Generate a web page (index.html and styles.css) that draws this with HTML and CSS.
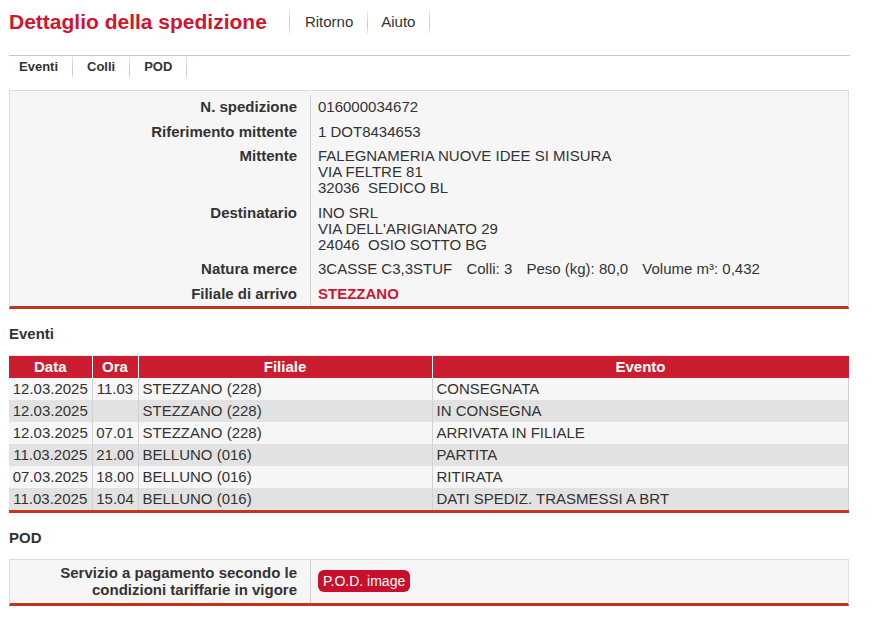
FILE: index.html
```html
<!DOCTYPE html>
<html lang="it">
<head>
<meta charset="utf-8">
<title>Dettaglio della spedizione</title>
<link rel="stylesheet" href="styles.css">
</head>
<body>
<div class="page">
  <header class="top">
    <h1 class="title">Dettaglio della spedizione</h1>
    <nav class="links">
      <a class="link" href="#">Ritorno</a>
      <a class="link last" href="#">Aiuto</a>
    </nav>
  </header>
  <nav class="tabs">
    <a class="tab first" href="#">Eventi</a>
    <a class="tab" href="#">Colli</a>
    <a class="tab" href="#">POD</a>
  </nav>

  <div class="box info">
    <table class="kv">
      <tr><th>N. spedizione</th><td>016000034672</td></tr>
      <tr><th>Riferimento mittente</th><td>1 DOT8434653</td></tr>
      <tr><th>Mittente</th><td>FALEGNAMERIA NUOVE IDEE SI MISURA<br>VIA FELTRE 81<br>32036&nbsp; SEDICO BL</td></tr>
      <tr><th>Destinatario</th><td>INO SRL<br>VIA DELL'ARIGIANATO 29<br>24046&nbsp; OSIO SOTTO BG</td></tr>
      <tr><th>Natura merce</th><td>3CASSE C3,3STUF <span class="gap">Colli: 3</span> <span class="gap">Peso (kg): 80,0</span> <span class="gap">Volume m³: 0,432</span></td></tr>
      <tr><th>Filiale di arrivo</th><td class="red">STEZZANO</td></tr>
    </table>
  </div>

  <h2 class="section">Eventi</h2>
  <table class="events">
    <colgroup><col class="c-data"><col class="c-ora"><col class="c-fil"><col></colgroup>
    <thead>
      <tr><th>Data</th><th>Ora</th><th>Filiale</th><th>Evento</th></tr>
    </thead>
    <tbody>
      <tr><td class="ctr">12.03.2025</td><td class="ctr">11.03</td><td>STEZZANO (228)</td><td>CONSEGNATA</td></tr>
      <tr><td class="ctr">12.03.2025</td><td class="ctr"></td><td>STEZZANO (228)</td><td>IN CONSEGNA</td></tr>
      <tr><td class="ctr">12.03.2025</td><td class="ctr">07.01</td><td>STEZZANO (228)</td><td>ARRIVATA IN FILIALE</td></tr>
      <tr><td class="ctr">11.03.2025</td><td class="ctr">21.00</td><td>BELLUNO (016)</td><td>PARTITA</td></tr>
      <tr><td class="ctr">07.03.2025</td><td class="ctr">18.00</td><td>BELLUNO (016)</td><td>RITIRATA</td></tr>
      <tr><td class="ctr">11.03.2025</td><td class="ctr">15.04</td><td>BELLUNO (016)</td><td>DATI SPEDIZ. TRASMESSI A BRT</td></tr>
    </tbody>
  </table>

  <h2 class="section">POD</h2>
  <div class="box pod">
    <table class="kv">
      <tr><th class="podlabel">Servizio a pagamento secondo le<br>condizioni tariffarie in vigore</th><td class="mid"><a class="btn" href="#">P.O.D. image</a></td></tr>
    </table>
  </div>
</div>
</body>
</html>
```

FILE: styles.css
```css
html, body {
  margin: 0;
  padding: 0;
  background: #fff;
}
body {
  font-family: "Liberation Sans", Arial, sans-serif;
  font-size: 15px;
  color: #333;
}
.page {
  width: 840px;
  margin-left: 9px;
}
.top {
  display: flex;
  align-items: center;
  height: 34px;
  padding-top: 5px;
}
.title {
  margin: 0 22px 0 0;
  font-size: 21px;
  font-weight: bold;
  color: #cf1530;
  line-height: 24px;
}
.links {
  display: flex;
  align-items: center;
}
.link {
  font-size: 15px;
  color: #333;
  text-decoration: none;
  padding: 0 14px 0 15px;
  line-height: 24px;
  border-left: 1px solid;
  border-image: linear-gradient(to bottom, rgba(230,200,200,0.3), #c8c8c8 60%, rgba(200,200,200,0.2)) 1;
}
.link.last {
  padding-left: 13px;
  border-right: 1px solid;
}
.tabs {
  display: flex;
  border-top: 1px solid #c8c8c8;
  margin-top: 16px;
  width: 841px;
  height: 23px;
}
.tab {
  font-size: 13px;
  font-weight: bold;
  color: #333;
  text-decoration: none;
  padding: 3px 14px 0;
  line-height: 15px;
  border-right: 1px solid;
  border-image: linear-gradient(to bottom, rgba(235,205,205,0.4), #c4c4c4 70%, rgba(200,200,200,0.1)) 1;
}
.tab.first {
  padding-left: 10px;
}
.box {
  background: #f6f6f6;
  border: 1px solid #dcdcdc;
  border-bottom: 3px solid #c4361c;
}
.info {
  margin-top: 11px;
  padding-top: 4px;
}
.kv {
  border-collapse: collapse;
  width: 100%;
}
.kv th {
  width: 287px;
  text-align: right;
  font-weight: bold;
  vertical-align: top;
  padding: 4px 13px 4.5px 0;
  line-height: 16px;
}
.kv td {
  border-left: 1px solid #cfcfcf;
  padding: 4px 7px 4.5px;
  vertical-align: top;
  line-height: 16px;
}
.kv td.red {
  color: #cf1530;
  font-weight: bold;
}
.gap {
  margin-left: 10px;
}
.section {
  font-size: 15px;
  font-weight: bold;
  margin: 17px 0 0;
  line-height: 16px;
}
.events {
  margin-top: 13px;
  width: 840px;
  border-collapse: collapse;
  table-layout: fixed;
  border-bottom: 3px solid #c4361c;
  border-top: 1px solid #e8e8e8;
}
.c-data { width: 83px; }
.c-ora { width: 46px; }
.c-fil { width: 294px; }
.events th {
  background: #cc1c30;
  color: #fff;
  font-weight: bold;
  height: 22px;
  padding: 0;
  line-height: 16px;
  border-left: 1px solid #fff;
}
.events th:first-child { border-left: none; }
.events td {
  height: 22px;
  padding: 0 4px;
  line-height: 16px;
  border-left: 1px solid #d2d2d2;
  white-space: nowrap;
}
.events td:first-child { border-left: none; }
.events td:last-child { border-right: 1px solid #d2d2d2; }
.events tbody tr:nth-child(odd) td { background: #f6f6f6; }
.events tbody tr:nth-child(even) td { background: #e2e2e2; }
.events td.ctr { text-align: center; padding: 0; }
.pod {
  margin-top: 13px;
}
.kv th.podlabel {
  padding-top: 4px;
  padding-bottom: 5px;
  line-height: 17px;
}
.kv td.mid {
  vertical-align: middle;
}
.btn {
  display: inline-block;
  background: #c8102e;
  color: #fff;
  font-size: 14px;
  text-decoration: none;
  border-radius: 6px;
  padding: 3px 5px;
  line-height: 16px;
}
```
